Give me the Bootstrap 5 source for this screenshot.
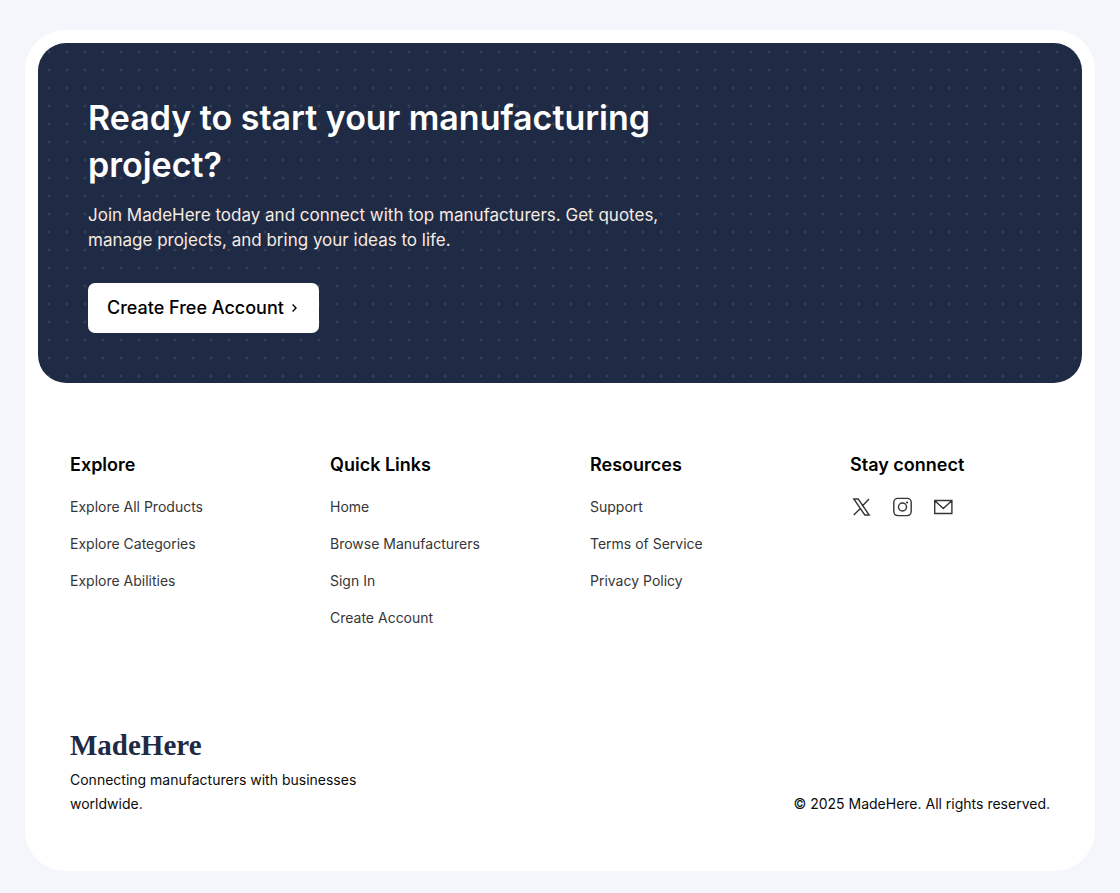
<!DOCTYPE html>
<html lang="en">
<head>
<meta charset="utf-8">
<meta name="viewport" content="width=device-width, initial-scale=1">
<title>MadeHere</title>
<link href="https://cdn.jsdelivr.net/npm/bootstrap@5.3.0/dist/css/bootstrap.min.css" rel="stylesheet">
<style>
  body { background: #f4f6fb; color: #0b0b0c; font-family: Inter, "Liberation Sans", sans-serif; font-size: 14px; line-height: 24px; padding: 30px 25px 22px; }
  .sheet { background: #fff; border-radius: 40px; padding: 13px; }
  .hero { background: #1f2a45 radial-gradient(circle at 11px 9px, #333e59 1px, transparent 2px) 0 0 / 18px 18px; border-radius: 28px; padding: 51px 50px 50px; }
  .hero-copy { max-width: 600px; }
  .hero h2 { font-size: 34px; line-height: 47px; font-weight: 600; color: #fff; margin-bottom: 15px; }
  .hero p { font-size: 17px; line-height: 25px; color: #f7ebe1; margin-bottom: 30px; }
  .btn-start { --bs-btn-bg: #fff; --bs-btn-color: #000; --bs-btn-hover-bg: #e9edf5; --bs-btn-hover-color: #000; --bs-btn-padding-x: 18px; --bs-btn-padding-y: 12px; --bs-btn-border-radius: 7px; --bs-btn-font-size: 18px; --bs-btn-line-height: 24px; --bs-btn-font-weight: 500; }
  .site-footer { padding: 68px 32px 42px; }
  .site-footer .row { --bs-gutter-x: 60px; --bs-gutter-y: 40px; }
  .site-footer h3 { font-size: 18px; line-height: 28px; font-weight: 600; color: #000; margin-bottom: 16px; }
  .site-footer li a, .social a { color: #363638; text-decoration: none; }
  .site-footer ul { gap: 13px; }
  .social { gap: 17px; }
  .closing { margin-top: 97px; }
  .brand { font-family: "Liberation Serif", serif; font-weight: 700; font-size: 29px; line-height: 36px; color: #1f2a45; text-decoration: none; }
  .tagline { max-width: 320px; margin-top: 5px; }
</style>
</head>
<body>
<div class="sheet">
  <section class="hero">
    <div class="hero-copy">
      <h2>Ready to start your manufacturing project?</h2>
      <p>Join MadeHere today and connect with top manufacturers. Get quotes, manage projects, and bring your ideas to life.</p>
    </div>
    <button type="button" class="btn btn-start d-inline-flex align-items-center gap-1">Create Free Account
      <svg width="12" height="12" viewBox="0 0 12 12" fill="none" stroke="currentColor" stroke-width="1.4" aria-hidden="true"><path d="M4.6 2.6 8 6 4.6 9.4"/></svg>
    </button>
  </section>

  <footer class="site-footer">
    <div class="row">
      <div class="col-6 col-md-3">
        <h3>Explore</h3>
        <ul class="list-unstyled d-flex flex-column mb-0">
          <li><a href="#">Explore All Products</a></li>
          <li><a href="#">Explore Categories</a></li>
          <li><a href="#">Explore Abilities</a></li>
        </ul>
      </div>
      <div class="col-6 col-md-3">
        <h3>Quick Links</h3>
        <ul class="list-unstyled d-flex flex-column mb-0">
          <li><a href="#">Home</a></li>
          <li><a href="#">Browse Manufacturers</a></li>
          <li><a href="#">Sign In</a></li>
          <li><a href="#">Create Account</a></li>
        </ul>
      </div>
      <div class="col-6 col-md-3">
        <h3>Resources</h3>
        <ul class="list-unstyled d-flex flex-column mb-0">
          <li><a href="#">Support</a></li>
          <li><a href="#">Terms of Service</a></li>
          <li><a href="#">Privacy Policy</a></li>
        </ul>
      </div>
      <div class="col-6 col-md-3">
        <h3>Stay connect</h3>
        <div class="social d-flex">
          <a href="#" class="d-flex" aria-label="X"><svg width="24" height="24" viewBox="0 0 24 24" fill="none" stroke="currentColor" stroke-width="1.4"><path d="M3.8 4h4.4l11 16h-4.4zM19 4l-6.9 7.3M10.6 13.2 3.8 20"/></svg></a>
          <a href="#" class="d-flex" aria-label="Instagram"><svg width="24" height="24" viewBox="0 0 24 24" fill="none" stroke="currentColor" stroke-width="1.4"><rect x="2.8" y="3.4" width="17.4" height="17.2" rx="4"/><circle cx="11.5" cy="12" r="4"/><circle cx="16.1" cy="7.5" r="1.1" fill="currentColor" stroke="none"/></svg></a>
          <a href="#" class="d-flex" aria-label="Email"><svg width="24" height="24" viewBox="0 0 24 24" fill="none" stroke="currentColor" stroke-width="1.4"><path d="M2.7 5.5h17.2v13H2.7zM2.7 5.5l8.6 8 8.6-8"/></svg></a>
        </div>
      </div>
    </div>
    <div class="closing d-flex flex-wrap justify-content-between align-items-end gap-3">
      <div>
        <a href="#" class="brand d-block">MadeHere</a>
        <div class="tagline">Connecting manufacturers with businesses worldwide.</div>
      </div>
      <div>© 2025 MadeHere. All rights reserved.</div>
    </div>
  </footer>
</div>
<script src="https://cdn.jsdelivr.net/npm/bootstrap@5.3.0/dist/js/bootstrap.bundle.min.js"></script>
</body>
</html>
